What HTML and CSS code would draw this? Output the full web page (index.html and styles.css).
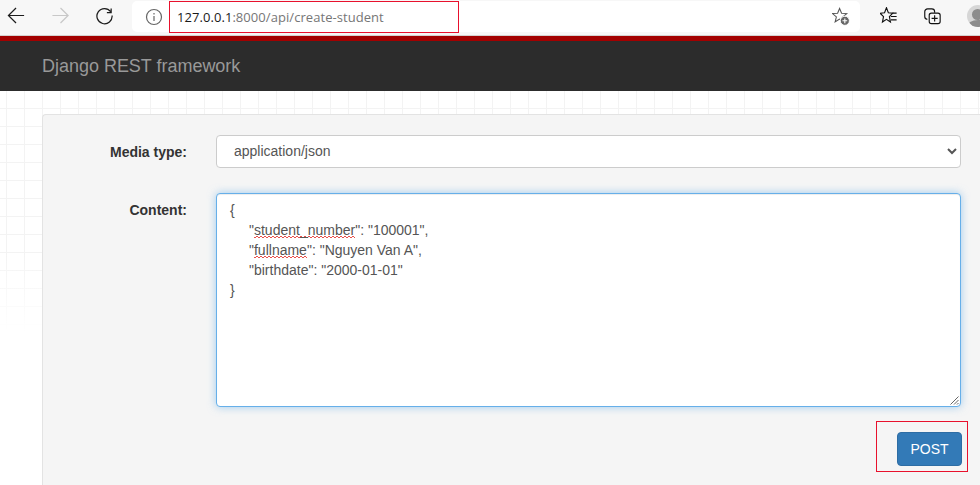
FILE: index.html
```html
<!DOCTYPE html>
<html lang="en">
<head>
<meta charset="utf-8">
<title>Django REST framework</title>
<link rel="stylesheet" href="styles.css">
</head>
<body>
<header class="toolbar">
  <div class="nav">
    <svg class="nav-icon back" viewBox="0 0 20 20"><path d="M18 10H1.500M9.500 2.100L1.500 10l8 7.900"/></svg>
    <svg class="nav-icon forward" viewBox="0 0 20 20"><path d="M1.500 10H18M10 2.100l8 7.900-8 7.900"/></svg>
    <svg class="nav-icon reload" viewBox="0 0 20 20"><path d="M16.500 6A8 8 0 1 0 18 10M17 2.500v4.500h-4.500"/></svg>
  </div>
  <div class="omnibox">
    <svg class="info" viewBox="0 0 18 18"><circle cx="9" cy="9" r="7.500"/><path d="M9 8v5M9 5v1.600"/></svg>
    <div class="url"><span class="host">127.0.0.1</span>:8000/api/create-student</div>
    <svg class="fav-add" viewBox="0 0 20 20"><path class="star" d="M8 1.500l2.100 5 5.400.4-4.100 3.500 1.300 5.200L8 12.800l-4.700 2.800 1.300-5.200L.5 6.900l5.400-.4z"/><circle class="dot" cx="13.500" cy="14.500" r="4.800"/><path class="plus" d="M13.500 12v5M11 14.500h5"/></svg>
  </div>
  <div class="tools">
    <svg class="tool favs" viewBox="0 0 20 20"><path d="M6.800.8l2 5.200 4.600.6-3.500 3.600L11 15.800 6.800 13l-4.200 2.800 1.100-5.600L.2 6.600 4.800 6z"/><path d="M13 6.500h4.500M11.500 10h6M11.500 13.500h6"/></svg>
    <svg class="tool colls" viewBox="0 0 20 20"><path d="M3.500 13A3 3 0 0 1 .8 10V5a3 3 0 0 1 3-3h4.400a3 3 0 0 1 3 3v1"/><rect x="5.500" y="6.500" width="11.500" height="11" rx="2.300"/><path d="M11.200 8.800v6.400M8 12h6.400"/></svg>
    <div class="avatar"><span class="avatar-head"></span><span class="avatar-body"></span></div>
  </div>
</header>
<nav class="navbar"><span class="brand">Django REST framework</span></nav>
<main class="page">
  <section class="well">
    <div class="form-row">
      <label class="form-label">Media type:</label>
      <select class="form-control">
        <option>application/json</option>
      </select>
    </div>
    <div class="form-row">
      <label class="form-label label-content">Content:</label>
      <div class="editor">
        <div class="editor-line">{</div>
        <div class="editor-line indent">"<span class="typo">student_number</span>": "100001",</div>
        <div class="editor-line indent">"<span class="typo">fullname</span>": "Nguyen Van A",</div>
        <div class="editor-line indent">"birthdate": "2000-01-01"</div>
        <div class="editor-line">}</div>
        <svg class="grip" viewBox="0 0 10 10"><path d="M9.500 1.500l-8 8M9.500 5l-4.500 4.500M9.500 8l-1.500 1.500"/></svg>
      </div>
    </div>
    <div class="actions"><button class="btn-post" type="button">POST</button></div>
  </section>
</main>
<div class="mark mark-url"></div>
<div class="mark mark-post"></div>
</body>
</html>
```

FILE: styles.css
```css
* { box-sizing: border-box; }
html, body { margin: 0; padding: 0; }
body {
  width: 980px;
  height: 485px;
  overflow: hidden;
  font-family: "Liberation Sans", Arial, sans-serif;
  font-size: 14px;
  color: #333;
  background: #fff;
  position: relative;
}
.toolbar {
  height: 36px;
  background: #f7f7f7;
  border-bottom: 1px solid #d4d2d0;
  display: flex;
  align-items: flex-start;
}
.nav {
  width: 132px;
  flex: none;
  display: flex;
  align-items: center;
  padding: 6px 0 0 7px;
  gap: 25px;
}
.nav-icon { width: 19px; height: 19px; fill: none; stroke-width: 1.300; flex: none; }
.back { stroke: #1c1c1c; }
.forward { stroke: #c8c8c8; }
.reload { stroke: #1c1c1c; }
.omnibox {
  width: 728px;
  height: 31px;
  flex: none;
  margin-top: 1px;
  background: #fff;
  border-radius: 5px;
  display: flex;
  align-items: center;
  padding: 0 9px 0 13px;
}
.info { width: 18px; height: 18px; fill: none; stroke: #666; stroke-width: 1.200; flex: none; }
.url {
  margin-left: 14px;
  flex: 1;
  font-family: "Open Sans", "Liberation Sans", sans-serif;
  font-size: 13px;
  letter-spacing: 0.06px;
  color: #767676;
}
.host { color: #1a1a1a; }
.fav-add { width: 19px; height: 19px; flex: none; }
.fav-add .star { fill: none; stroke: #555; stroke-width: 1.100; }
.fav-add .dot { fill: #666; stroke: #fff; }
.fav-add .plus { stroke: #fff; stroke-width: 1.200; }
.tools { flex: 1; min-width: 0; display: flex; align-items: center; padding: 6px 0 0 20px; gap: 25px; }
.tool { width: 19px; height: 19px; fill: none; stroke: #111; stroke-width: 1.200; flex: none; }
.avatar {
  width: 22px;
  height: 22px;
  flex: none;
  margin-left: -1px;
  margin-top: -1px;
  border-radius: 50%;
  background: #d6d6d6;
  overflow: hidden;
  position: relative;
}
.avatar-head { position: absolute; left: 5px; top: 4px; width: 11px; height: 11px; border-radius: 50%; background: #8c8c8c; }
.avatar-body { position: absolute; left: 0; top: 15px; width: 22px; height: 14px; border-radius: 50%; background: #8c8c8c; }
.navbar {
  height: 55px;
  background: #2c2c2c;
  border-top: 5px solid #a30000;
  display: flex;
  align-items: center;
  padding: 0 0 0 42px;
}
.brand { font-size: 18px; color: #999; letter-spacing: -0.02px; }
.page {
  height: 394px;
  padding: 23px 0 0 42px;
  background-color: #fff;
  background-image:
    linear-gradient(to bottom, rgba(255,255,255,0) 160px, #fff 240px),
    linear-gradient(#f3f3f3 1px, transparent 1px),
    linear-gradient(90deg, #f3f3f3 1px, transparent 1px);
  background-size: 100% 100%, 18px 18px, 18px 18px;
  background-position: 0 0, 6px 17px, 6px 17px;
}
.well {
  height: 371px;
  background: #f5f5f5;
  border: 1px solid #e3e3e3;
  border-right: 0;
  border-bottom: 0;
  border-radius: 4px 0 0 0;
  padding: 20px 19px 0 0;
}
.form-row { display: flex; align-items: flex-start; margin-bottom: 25px; }
.form-label {
  width: 144px;
  margin-right: 29px;
  padding-top: 9px;
  text-align: right;
  font-weight: 700;
  color: #333;
  flex: none;
}
.form-control {
  flex: 1;
  height: 33px;
  padding: 0 13px 2px;
  background: #fff;
  border: 1px solid #ccc;
  border-radius: 4px;
  font: 14px "Liberation Sans", Arial, sans-serif;
  color: #555;
}
.editor {
  flex: 1;
  height: 214px;
  padding: 6px 12px 6px 13px;
  background: #fff;
  border: 1px solid #66afe9;
  border-radius: 4px;
  box-shadow: inset 0 1px 1px rgba(0,0,0,.075), 0 0 8px rgba(102,175,233,.6);
  color: #555;
  line-height: 20px;
  position: relative;
}
.editor-line { height: 20px; }
.indent { padding-left: 19px; }
.typo {
  background-image:
    linear-gradient(135deg, transparent 35%, #e8504a 35%, #e8504a 65%, transparent 65%),
    linear-gradient(45deg, transparent 35%, #e8504a 35%, #e8504a 65%, transparent 65%);
  background-size: 4px 2px;
  background-position: 0 100%, 2px 100%;
  background-repeat: repeat-x;
}
.grip { position: absolute; right: 1px; bottom: 1px; width: 10px; height: 10px; fill: none; stroke: #666; stroke-width: 1; }
.actions { display: flex; justify-content: flex-end; }
.btn-post {
  width: 65px;
  height: 34px;
  margin-right: -1px;
  background: #337ab7;
  border: 1px solid #2e6da4;
  border-radius: 4px;
  color: #fff;
  font: 14px "Liberation Sans", Arial, sans-serif;
  padding: 0;
}
.mark { position: absolute; border: 1px solid #e8112d; pointer-events: none; }
.mark-url { left: 169px; top: 1px; width: 290px; height: 32px; }
.mark-post { left: 876px; top: 421px; width: 92px; height: 51px; }
```
